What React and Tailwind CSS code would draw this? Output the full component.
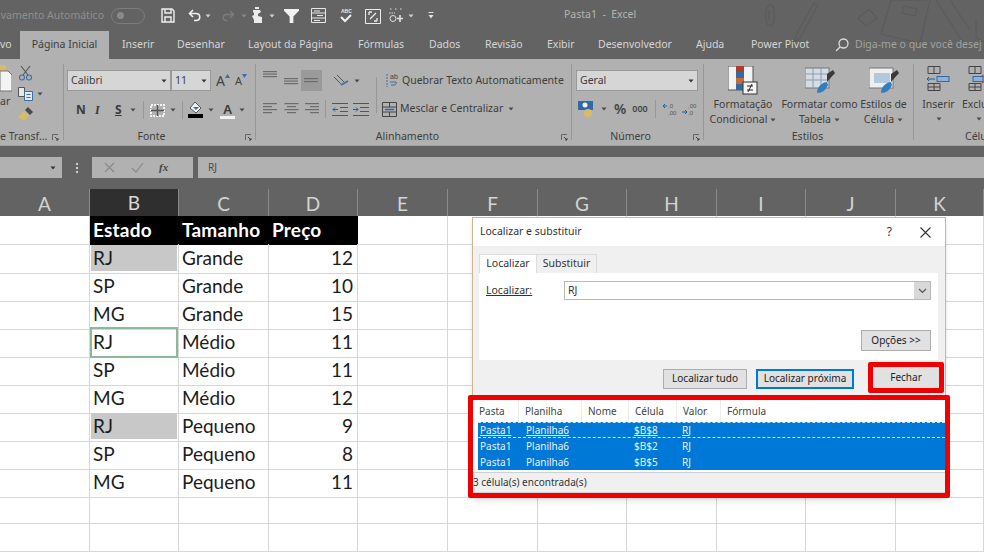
const uiFont = { fontFamily: '"Noto Sans", "Open Sans", sans-serif' }

const gridCols = 'grid grid-cols-[90px_89px_90px_89px_90px_90px_89px_90px_89px_90px_88px]'

const tabs = [
  ['Inserir', 'ml-[13px] w-[30px]'],
  ['Desenhar', 'ml-[25px] w-[45px]'],
  ['Layout da Página', 'ml-[26px] w-[84px]'],
  ['Fórmulas', 'ml-[26px] w-[45px]'],
  ['Dados', 'ml-[26px] w-[30px]'],
  ['Revisão', 'ml-[26px] w-[36px]'],
  ['Exibir', 'ml-[26px] w-[26px]'],
  ['Desenvolvedor', 'ml-[25px] w-[73px]'],
  ['Ajuda', 'ml-[25px] w-[29px]'],
  ['Power Pivot', 'ml-[26px] w-[58px]'],
]

const columns = ['A', 'B', 'C', 'D', 'E', 'F', 'G', 'H', 'I', 'J', 'K']

const sheetRows = [
  ['Estado', 'Tamanho', 'Preço'],
  ['RJ', 'Grande', '12'],
  ['SP', 'Grande', '10'],
  ['MG', 'Grande', '15'],
  ['RJ', 'Médio', '11'],
  ['SP', 'Médio', '11'],
  ['MG', 'Médio', '12'],
  ['RJ', 'Pequeno', '9'],
  ['SP', 'Pequeno', '8'],
  ['MG', 'Pequeno', '11'],
  ['', '', ''],
  ['', '', ''],
]

const results = [
  ['Pasta1', 'Planilha6', '$B$8', 'RJ'],
  ['Pasta1', 'Planilha6', '$B$2', 'RJ'],
  ['Pasta1', 'Planilha6', '$B$5', 'RJ'],
]

function Caret({ className = '', color = '#4a4a4a' }) {
  return (
    <svg width="6" height="4" viewBox="0 0 6 4" className={className}>
      <path d="M0.5 0.5h5L3 3.5z" fill={color} />
    </svg>
  )
}

function Launcher({ className = '' }) {
  return (
    <svg width="7" height="7" viewBox="0 0 7 7" className={className}>
      <path d="M0.5 6V0.5H6" stroke="#666" fill="none" />
      <path d="M3 3l3 3M6 4v2H4" stroke="#444" fill="none" />
    </svg>
  )
}

function Lines({ widths, gap = 3, color = '#6c6c6c', x = 0 }) {
  return (
    <svg width="15" height="13" viewBox="0 0 15 13">
      {widths.map((w, i) => (
        <rect key={i} x={x === 'right' ? 15 - w : x === 'center' ? (15 - w) / 2 : 0} y={i * gap} width={w} height="1.2" fill={color} />
      ))}
    </svg>
  )
}

function Sketches() {
  return (
    <svg width="224" height="59" viewBox="0 0 224 59" fill="none" stroke="#5b5b5b" strokeWidth="1.2">
      <path d="M8 6c-3 3-3 16 0 19 3 2 6-1 6-5V8c-1-3-4-4-6-2zM9 10v10" />
      <path d="M36 35L54 3l4 2-18 33-6 4z" />
      <path d="M98 18l11-9 8 9-11 8z" />
      <path d="M121 34l10-34M121 34l38 9 5-14M131 0h36M160 43l10-43" />
      <path d="M144 6l13 3-2 7-13-3z" />
      <path d="M176 0l28 44M190 0l20 30M216 20v18l8 4" />
    </svg>
  )
}

function TitleBar() {
  return (
    <div className="relative flex items-center h-[31px]">
      <div className="w-[111px] shrink-0 pr-[7px] flex justify-end text-[10.5px] text-[#8f8f8f] whitespace-nowrap">vamento Automático</div>
      <div className="w-[34px] h-[16px] rounded-full border border-[#7c7c7c] flex items-center pl-[5px] shrink-0">
        <div className="w-[7px] h-[7px] rounded-full bg-[#8a8a8a]" />
      </div>
      <svg width="14" height="15" viewBox="0 0 14 15" className="ml-[16px] shrink-0" fill="none" stroke="#f0f0f0" strokeWidth="1.4">
        <path d="M1 1h10l2 2v11H1z" />
        <path d="M4 1v4h6V1M4 14V9h6v5" />
      </svg>
      <svg width="14" height="13" viewBox="0 0 14 13" className="ml-[13px] shrink-0" fill="none" stroke="#f0f0f0" strokeWidth="1.6">
        <path d="M5 1L1.5 4.5 5 8M2 4.5h6c5 0 5 7 0 7H6" />
      </svg>
      <Caret color="#d0d0d0" className="ml-[3px] shrink-0" />
      <svg width="14" height="12" viewBox="0 0 14 12" className="ml-[10px] shrink-0" fill="none" stroke="#7e7e7e" strokeWidth="1.4">
        <path d="M9 1l3.5 3.5L9 8M12 4.500H6c-5 0-5 6 0 6" />
      </svg>
      <Caret color="#8a8a8a" className="ml-[6px] shrink-0" />
      <svg width="12" height="17" viewBox="0 0 12 17" className="ml-[4px] shrink-0" fill="#ececec">
        <path d="M4 0h4v2H4zM2 3h7l1 2-3 2v2l4 1v6H3v-3L1 9l2-1V6L2 5z" />
      </svg>
      <Caret color="#d0d0d0" className="ml-[6px] shrink-0" />
      <svg width="15" height="14" viewBox="0 0 16 15" className="ml-[9px] shrink-0" fill="#f2f2f2">
        <path d="M0 0h16v2l-6 6v7H6V8L0 2z" />
      </svg>
      <svg width="15" height="15" viewBox="0 0 15 15" className="ml-[12px] shrink-0" fill="none" stroke="#e8e8e8">
        <path d="M0.500 0.500h14v14h-14zM0.500 5h14M0.500 10h14" />
        <path d="M3 3h6M6 7.500h6M3 12.500h6" />
      </svg>
      <svg width="14" height="15" viewBox="0 0 14 15" className="ml-[13px] shrink-0" fill="none">
        <text x="2" y="5" fontSize="5" fill="#e8e8e8" fontFamily="Liberation Sans" fontWeight="700">ABC</text>
        <path d="M2 9l4 4 6-6" stroke="#f0f0f0" strokeWidth="2" />
      </svg>
      <svg width="16" height="16" viewBox="0 0 16 16" className="ml-[12px] shrink-0" fill="none" stroke="#ececec">
        <path d="M0.500 1.500h15v14h-15z" />
        <path d="M4 4h3M4 4v3M12 13H9M12 13v-3M5 11l6-6" strokeWidth="1.300" />
      </svg>
      <svg width="16" height="15" viewBox="0 0 16 15" className="ml-[7px] shrink-0" fill="none" stroke="#e0e0e0">
        <path d="M2 1h2M7 1h2M12 1h2M1 5h6" strokeDasharray="1.500 1" />
        <circle cx="5" cy="10.500" r="3" />
        <path d="M12 7v7M9 10.500h6" strokeWidth="1.600" />
      </svg>
      <Caret color="#d0d0d0" className="ml-[4px] shrink-0" />
      <svg width="6" height="7" viewBox="0 0 6 7" className="ml-[14px] shrink-0">
        <path d="M0.500 0.500h5" stroke="#e0e0e0" />
        <path d="M0.500 3h5L3 6.500z" fill="#e0e0e0" />
      </svg>
      <span className="absolute left-[564px] top-[7px] text-[10.5px] text-[#b4b4b4] whitespace-pre">Pasta1  -  Excel</span>
    </div>
  )
}

function TabBar() {
  return (
    <div className="relative flex items-stretch h-[28px] overflow-hidden text-[10.5px] text-[#d6d6d6] whitespace-nowrap">
      <span className="w-[20px] shrink-0 flex items-center">vo</span>
      <span className="w-[89px] shrink-0 bg-[#b1b1b1] text-[#3d3d3d] flex items-center justify-center">Página Inicial</span>
      {tabs.map(([label, cls]) => (
        <span key={label} className={`${cls} shrink-0 flex items-center`}>{label}</span>
      ))}
      <svg width="14" height="14" viewBox="0 0 14 14" className="ml-[26px] shrink-0 self-center" fill="none" stroke="#dedede" strokeWidth="1.3">
        <circle cx="8.500" cy="5.500" r="4.500" />
        <path d="M5 9l-4 4" />
      </svg>
      <span className="ml-[6px] text-[#a2a2a2] flex items-center">Diga-me o que você desej</span>
    </div>
  )
}

function GroupLabel({ children, launcher, className = '' }) {
  return (
    <div className={`absolute bottom-[-7px] left-0 right-0 h-[20px] flex items-center justify-center text-[10.5px] text-[#3f3f3f] ${className}`}>
      {children}
      {launcher && <Launcher className="absolute right-[3px] top-[7px]" />}
    </div>
  )
}

function Combo({ label, className = '' }) {
  return (
    <div className={`h-[21px] bg-[#d6d6d6] border border-[#999] flex items-center justify-between pl-[3px] pr-[3px] text-[10.5px] text-[#3d3d3d] ${className}`}>
      <span>{label}</span>
      <Caret color="#333" />
    </div>
  )
}

function ClipboardGroup() {
  return (
    <div className="relative w-[64px] shrink-0 border-r border-[#979797] my-[5px]">
      <div className="flex pt-[1px]">
        <div className="w-[18px] shrink-0 flex flex-col items-start">
          <svg width="12" height="28" viewBox="0 0 12 28">
            <rect x="0" y="0" width="6" height="6" fill="#d9b96a" />
            <path d="M0 6h8l4 4v16H0z" fill="#f4f4f4" stroke="#777" />
          </svg>
          <span className="text-[10.5px] text-[#3f3f3f] leading-[12px] mt-[2px]">ar</span>
        </div>
        <div className="flex flex-col gap-[6px]">
          <svg width="15" height="16" viewBox="0 0 15 16" fill="none" stroke="#555" strokeWidth="1.100">
            <path d="M3 1l7 9M12 1l-7 9" />
            <circle cx="4" cy="12.500" r="2.500" stroke="#3a6ea5" />
            <circle cx="11" cy="12.500" r="2.500" stroke="#3a6ea5" />
          </svg>
          <div className="flex items-center gap-[4px]">
            <svg width="15" height="14" viewBox="0 0 15 14" fill="none" stroke="#555">
              <path d="M0.500 0.500h6v9h-6z" fill="#e8e8e8" />
              <path d="M6.500 4.500h8v9h-8z" fill="#e8e8e8" stroke="#3a6ea5" />
              <path d="M8.500 7.500h4M8.500 10.500h4" stroke="#3a6ea5" />
            </svg>
            <Caret />
          </div>
          <svg width="15" height="14" viewBox="0 0 15 14">
            <path d="M0 10l6-6 5 5-5 5z" fill="#d9b96a" />
            <path d="M7 3l3-3 5 5-3 3z" fill="#4a4a4a" />
          </svg>
        </div>
      </div>
      <div className="absolute bottom-[-7px] left-0 right-0 h-[20px] flex items-center text-[10.5px] text-[#3f3f3f] whitespace-nowrap">
        <span>e Transf...</span>
        <Launcher className="absolute left-[52px] top-[7px]" />
      </div>
    </div>
  )
}

function FontGroup() {
  return (
    <div className="relative w-[192px] shrink-0 border-r border-[#979797] my-[5px] pl-[3px] pt-[6px]">
      <div className="flex items-center">
        <Combo label="Calibri" className="w-[104px]" />
        <Combo label="11" className="w-[40px]" />
        <span className="ml-[5px] text-[14px] text-[#444] leading-none">A</span>
        <svg width="5" height="4" viewBox="0 0 5 4" className="mb-[10px]"><path d="M0 4l2.500-4L5 4z" fill="#3a6ea5" /></svg>
        <span className="ml-[5px] text-[11px] text-[#444] leading-none">A</span>
        <svg width="5" height="4" viewBox="0 0 5 4" className="mb-[10px]"><path d="M0 0l2.500 4L5 0z" fill="#3a6ea5" /></svg>
      </div>
      <div className="flex items-center mt-[9px] h-[20px] text-[12px] text-[#3a3a3a]">
        <span className="ml-[9px] w-[19px] font-bold">N</span>
        <span className="w-[20px] italic font-bold" style={{ fontFamily: '"Liberation Serif", serif' }}>I</span>
        <span className="w-[15px] underline font-bold">S</span>
        <Caret />
        <div className="ml-[7px] mr-[6px] w-px h-[18px] bg-[#979797]" />
        <svg width="15" height="13" viewBox="0 0 15 13" fill="none" stroke="#f2f2f2" strokeWidth="2">
          <rect x="1" y="1" width="13" height="11" strokeDasharray="2 1" />
          <path d="M7.500 1v11M1 6.500h13" stroke="#555" strokeWidth="1.500" />
        </svg>
        <Caret className="ml-[5px]" />
        <div className="ml-[6px] mr-[5px] w-px h-[18px] bg-[#979797]" />
        <svg width="15" height="16" viewBox="0 0 15 16">
          <path d="M7 0l6 6-5 5-6-5z" fill="#f2f2f2" stroke="#555" />
          <path d="M5 5h6l-3 3z" fill="#3a6ea5" />
          <rect x="0" y="12" width="15" height="4" fill="#000" />
        </svg>
        <Caret className="ml-[5px]" />
        <span className="ml-[6px] w-[15px] relative text-center font-semibold text-[13px] leading-[14px] border-b-[3px] border-[#f2f2f2]">A</span>
        <Caret className="ml-[4px]" />
      </div>
      <GroupLabel launcher className="pr-[16px]">Fonte</GroupLabel>
    </div>
  )
}

function AlignGroup() {
  return (
    <div className="relative w-[316px] shrink-0 border-r border-[#979797] my-[5px] pt-[6px]">
      <div className="flex items-center h-[21px] pl-[7px]">
        <div className="mt-[-6px] flex"><Lines widths={[14, 14, 14]} gap={2.500} /></div>
        <div className="ml-[6px] mt-[8px] flex"><Lines widths={[14, 14, 14]} gap={2.500} /></div>
        <div className="ml-[2px] w-[21px] h-[21px] bg-[#9a9a9a] flex items-end justify-center"><Lines widths={[14, 14]} gap={3} /></div>
        <svg width="16" height="14" viewBox="0 0 16 14" className="ml-[11px]" fill="none" stroke="#555">
          <path d="M1 3l7 7M4 1l7 7" />
          <path d="M8 11l7-4" stroke="#3a6ea5" strokeWidth="1.500" />
        </svg>
        <Caret className="ml-[5px]" />
        <div className="ml-[16px] mr-[8px] w-px h-[36px] mt-[28px] bg-[#979797]" />
        <div className="flex items-center gap-[3px] text-[10.5px] text-[#3d3d3d] whitespace-nowrap">
          <svg width="14" height="15" viewBox="0 0 14 15" fill="none" stroke="#555">
            <path d="M2 1v13" stroke="#3a6ea5" strokeDasharray="2 1" />
            <text x="5" y="6" fontSize="7" fill="#444" stroke="none" fontFamily="Liberation Sans">ab</text>
            <path d="M5 9h6a2 2 0 0 1-2 3H6" stroke="#3a6ea5" />
          </svg>
          Quebrar Texto Automaticamente
        </div>
      </div>
      <div className="flex items-center h-[20px] mt-[8px] pl-[7px]">
        <Lines widths={[14, 9, 14, 9]} gap={3} />
        <div className="ml-[6px]"><Lines widths={[14, 9, 14, 9]} gap={3} x="center" /></div>
        <div className="ml-[5px]"><Lines widths={[14, 9, 14, 9]} gap={3} x="right" /></div>
        <div className="ml-[6px] w-px h-[18px] bg-[#979797]" />
        <svg width="16" height="13" viewBox="0 0 16 13" className="ml-[6px]" fill="none" stroke="#555">
          <path d="M0 0.500h16M8 4.500h8M8 8.500h8M0 12.500h16" />
          <path d="M6 6.500H1M3 4.500l-2 2 2 2" stroke="#1f5f9f" />
        </svg>
        <svg width="16" height="13" viewBox="0 0 16 13" className="ml-[5px]" fill="none" stroke="#555">
          <path d="M0 0.500h16M7 4.500h9M7 8.500h9M0 12.500h16" />
          <path d="M0 6.500h5M3 4.500l2 2-2 2" stroke="#1f5f9f" />
        </svg>
        <div className="flex items-center gap-[3px] ml-[13px] text-[10.5px] text-[#3d3d3d] whitespace-nowrap">
          <svg width="15" height="15" viewBox="0 0 15 15" fill="none" stroke="#444">
            <path d="M0.500 0.500h14v14h-14zM0.500 5h14M0.500 10h14M7.500 0.500V5M7.500 10v5" />
            <path d="M3 7.500h9" stroke="#2a6aa8" strokeWidth="1.500" />
          </svg>
          Mesclar e Centralizar
          <Caret className="ml-[2px]" />
        </div>
      </div>
      <GroupLabel launcher className="pr-[12px]">Alinhamento</GroupLabel>
    </div>
  )
}

function NumberGroup() {
  return (
    <div className="relative w-[132px] shrink-0 border-r border-[#979797] my-[5px] pl-[4px] pt-[6px]">
      <Combo label="Geral" className="w-[122px]" />
      <div className="flex items-center h-[20px] mt-[8px] text-[#444]">
        <svg width="17" height="17" viewBox="0 0 17 17" className="ml-[2px]">
          <rect x="0" y="0" width="15" height="9" fill="#2f6aa5" />
          <circle cx="7" cy="4" r="2.500" fill="#f2f2f2" />
          <circle cx="10" cy="12" r="4" fill="#d9b96a" />
        </svg>
        <Caret className="ml-[6px]" />
        <span className="ml-[7px] text-[14px] font-semibold leading-none">%</span>
        <span className="ml-[6px] text-[9px] font-semibold">000</span>
        <div className="ml-[7px] w-px h-[18px] bg-[#979797]" />
        <svg width="16" height="14" viewBox="0 0 16 14" className="ml-[6px]" fill="none" stroke="#555">
          <text x="6" y="6" fontSize="6" fill="#555" stroke="none" fontFamily="Liberation Sans">,0</text>
          <text x="6" y="13" fontSize="6" fill="#555" stroke="none" fontFamily="Liberation Sans">,00</text>
          <path d="M1 4h4M1 4l2-2M1 4l2 2" stroke="#1f5f9f" />
        </svg>
        <svg width="16" height="14" viewBox="0 0 16 14" className="ml-[4px]" fill="none" stroke="#555">
          <text x="6" y="6" fontSize="6" fill="#555" stroke="none" fontFamily="Liberation Sans">,00</text>
          <text x="6" y="13" fontSize="6" fill="#555" stroke="none" fontFamily="Liberation Sans">,0</text>
          <path d="M0 10h5M5 10l-2-2M5 10l-2 2" stroke="#1f5f9f" />
        </svg>
      </div>
      <GroupLabel launcher className="pr-[14px]">Número</GroupLabel>
    </div>
  )
}

function StyleButton({ width, icon, line1, line2 }) {
  return (
    <div className={`${width} shrink-0 flex flex-col items-center text-[10.5px] leading-[15px] text-[#3d3d3d] whitespace-nowrap`}>
      <div className="h-[32px] flex items-center">{icon}</div>
      <span className="mt-[1px]">{line1}</span>
      <span className="flex items-center gap-[3px]">{line2}<Caret /></span>
    </div>
  )
}

function StylesGroup() {
  return (
    <div className="relative w-[210px] shrink-0 border-r border-[#979797] my-[5px] flex">
      <StyleButton
        width="w-[76px] ml-[1px]"
        line1="Formatação"
        line2="Condicional"
        icon={
          <svg width="30" height="29" viewBox="0 0 30 29">
            <rect x="0" y="0" width="25" height="24" fill="#f2f2f2" stroke="#555" />
            <rect x="8" y="0" width="8" height="6" fill="#b33a2a" />
            <rect x="8" y="6" width="8" height="6" fill="#2f6aa5" />
            <rect x="8" y="12" width="8" height="6" fill="#c96a35" />
            <rect x="8" y="18" width="8" height="6" fill="#2f6aa5" />
            <rect x="15" y="16" width="14" height="12" fill="#f5f5f5" stroke="#333" />
            <path d="M19 20h6M19 24h6M24 18l-4 8" stroke="#222" />
          </svg>
        }
      />
      <StyleButton
        width="w-[77px]"
        line1="Formatar como"
        line2="Tabela"
        icon={
          <svg width="30" height="28" viewBox="0 0 30 28">
            <rect x="0" y="2" width="24" height="20" fill="#d7dce2" stroke="#777" />
            <path d="M0 8h24M0 14h24M8 2v20M16 2v20" stroke="#8c9bb0" />
            <path d="M22 8l6-4 2 3-8 9z" fill="#3a3a3a" />
            <path d="M12 27c0-7 6-11 10-11l1 3c-2 5-6 8-11 8z" fill="#2f7fc0" />
          </svg>
        }
      />
      <StyleButton
        width="w-[51px]"
        line1="Estilos de"
        line2="Célula"
        icon={
          <svg width="30" height="28" viewBox="0 0 30 28">
            <rect x="0" y="2" width="24" height="20" fill="#eeeeee" stroke="#777" />
            <rect x="5" y="7" width="16" height="10" fill="#b4c8dc" />
            <path d="M22 8l6-4 2 3-8 9z" fill="#3a3a3a" />
            <path d="M12 27c0-7 6-11 10-11l1 3c-2 5-6 8-11 8z" fill="#2f7fc0" />
          </svg>
        }
      />
      <GroupLabel className="pr-[2px]">Estilos</GroupLabel>
    </div>
  )
}

function CellsGroup() {
  return (
    <div className="relative flex-1 my-[5px] flex">
      <div className="ml-[2px] w-[45px] shrink-0 flex flex-col items-center text-[10.5px] leading-[15px] text-[#3d3d3d]">
        <svg width="25" height="25" viewBox="0 0 25 25" className="mt-[2px] mb-[6px]" fill="none" stroke="#444">
          <path d="M2 0.500h12v7H2zM8 0.500v7M2 17.500h12v7H2zM2 21h12M8 17.500v7" />
          <rect x="11" y="10.500" width="12" height="5" fill="#8fb2d6" stroke="#2f6aa5" />
          <path d="M1 13h8M3 11l-2 2 2 2" stroke="#1f5f9f" />
        </svg>
        <span>Inserir</span>
        <Caret className="mt-[5px]" />
      </div>
      <div className="w-[24px] ml-[1px] shrink-0 flex flex-col items-start text-[10.5px] leading-[15px] text-[#3d3d3d] whitespace-nowrap">
        <svg width="25" height="25" viewBox="0 0 25 25" className="mt-[2px] mb-[6px] ml-[5px]" fill="none" stroke="#444">
          <path d="M2 0.500h12v7H2zM8 0.500v7M2 17.500h12v7H2zM2 21h12M8 17.500v7" />
          <rect x="6" y="10.500" width="10" height="5" fill="#8fb2d6" stroke="#2f6aa5" />
          <path d="M15 9l5 4-5 4M25 9l-5 4 5 4" stroke="#c8452f" strokeWidth="1.500" />
        </svg>
        <span>Exclu</span>
        <Caret className="mt-[5px] ml-[14px]" />
      </div>
      <div className="absolute bottom-[-7px] left-[51px] h-[20px] flex items-center text-[10.5px] text-[#3f3f3f] whitespace-nowrap">Célu</div>
    </div>
  )
}

function Ribbon() {
  return (
    <div className="flex h-[87px] bg-[#b1b1b1] overflow-hidden border-b border-[#a2a2a2]">
      <ClipboardGroup />
      <FontGroup />
      <AlignGroup />
      <NumberGroup />
      <StylesGroup />
      <CellsGroup />
    </div>
  )
}

function FormulaBar() {
  return (
    <div className="flex items-center h-[43px] bg-[#636363]">
      <div className="w-[62px] h-[21px] bg-[#b1b1b1] flex items-center justify-end pr-[6px] shrink-0">
        <Caret color="#333" />
      </div>
      <div className="w-[30px] flex flex-col items-center gap-[2px] shrink-0">
        <div className="w-[2px] h-[2px] bg-[#d0d0d0]" />
        <div className="w-[2px] h-[2px] bg-[#d0d0d0]" />
        <div className="w-[2px] h-[2px] bg-[#d0d0d0]" />
      </div>
      <div className="w-[101px] h-[21px] bg-[#b1b1b1] flex items-center shrink-0">
        <svg width="11" height="11" viewBox="0 0 11 11" className="ml-[12px]" stroke="#8a8a8a" strokeWidth="1.200" fill="none">
          <path d="M1 1l9 9M10 1l-9 9" />
        </svg>
        <svg width="13" height="11" viewBox="0 0 13 11" className="ml-[16px]" stroke="#8a8a8a" strokeWidth="1.200" fill="none">
          <path d="M1 6l4 4 7-9" />
        </svg>
        <span className="ml-[15px] text-[11px] italic font-semibold text-[#444]" style={{ fontFamily: '"Liberation Serif", serif' }}>fx</span>
      </div>
      <div className="ml-[5px] flex-1 h-[21px] bg-[#b1b1b1] flex items-center pl-[10px] text-[10px] text-[#4a4a4a]">RJ</div>
    </div>
  )
}

function ColumnHeaders() {
  return (
    <div className={`${gridCols} h-[27px] bg-[#636363]`}>
      {columns.map((col) => (
        <div
          key={col}
          className={`flex items-center justify-center text-[19px] border-r border-[#8a8a8a] ${col === 'B' ? 'bg-[#2f2f2f] text-[#d9d9d9] border-b-2 border-b-[#217346]' : 'text-[#d4d4d4]'}`}
          style={{ fontFamily: 'Lato, sans-serif' }}
        >
          {col}
        </div>
      ))}
    </div>
  )
}

function SheetCell({ value, rowIndex, colIndex }) {
  const isHeader = rowIndex === 0
  const isFound = colIndex === 1 && (rowIndex === 1 || rowIndex === 7)
  const isActive = colIndex === 1 && rowIndex === 4

  if (isHeader && colIndex >= 1 && colIndex <= 3) {
    return (
      <div className="bg-black text-white font-bold px-[3px] flex items-center text-[19px] tracking-[0.2px] whitespace-nowrap">
        {value}
      </div>
    )
  }

  return (
    <div className={`relative border-r border-b border-[#d6d6d6] flex items-center px-[3px] text-[19px] text-[#1c1c1c] ${colIndex === 3 ? 'justify-end pr-[4px]' : ''}`}>
      {isFound && <div className="absolute inset-x-[1px] top-[1px] bottom-[2px] bg-[#c8c8c8]" />}
      {isActive && <div className="absolute -inset-y-px inset-x-0 border-2 border-[#8cb89c]" />}
      <span className="relative">{value}</span>
    </div>
  )
}

function Sheet() {
  return (
    <div className="bg-white" style={{ fontFamily: 'Lato, sans-serif' }}>
      {sheetRows.map((row, rowIndex) => (
        <div key={rowIndex} className={`${gridCols} h-[28px]`}>
          {columns.map((col, colIndex) => (
            <SheetCell
              key={col}
              rowIndex={rowIndex}
              colIndex={colIndex}
              value={colIndex >= 1 && colIndex <= 3 ? row[colIndex - 1] : ''}
            />
          ))}
        </div>
      ))}
    </div>
  )
}

function DialogButton({ children, className = 'border border-[#adadad]' }) {
  return (
    <div className={`h-full bg-[#e1e1e1] flex items-center justify-center text-[10px] text-[#222] whitespace-nowrap ${className}`}>
      {children}
    </div>
  )
}

function FindDialog() {
  return (
    <div className="absolute left-[472px] top-[217px] w-[474px] bg-[#f0f0f0] border-x border-t border-[#cdb690] shadow-md text-[#333]" style={uiFont}>
      <div className="h-[28px] bg-white flex items-center justify-between pl-[7px] pr-[14px] text-[10.5px]">
        <span>Localizar e substituir</span>
        <div className="flex items-center gap-[28px]">
          <span className="text-[12px]">?</span>
          <svg width="11" height="11" viewBox="0 0 11 11" stroke="#333" strokeWidth="1.100"><path d="M0.500 0.500l10 10M10.500 0.500l-10 10" /></svg>
        </div>
      </div>
      <div className="pt-[8px] px-[6px]">
        <div className="flex text-[10.5px] h-[19px]">
          <span className="w-[58px] bg-white border-x border-t border-[#dcdcdc] flex items-center justify-center">Localizar</span>
          <span className="w-[60px] border-r border-t border-[#dcdcdc] flex items-center justify-center">Substituir</span>
        </div>
        <div className="h-[87px] bg-white px-[7px] pt-[8px] w-[459px] flex flex-col">
          <div className="flex items-center text-[10.5px]">
            <span className="w-[78px] shrink-0"><span className="underline">Localizar:</span></span>
            <div className="w-[369px] h-[19px] border border-[#b8b8b8] flex items-center justify-between pl-[3px]">
              RJ
              <div className="w-[16px] h-[17px] bg-[#d8d8d8] flex items-center justify-center">
                <svg width="9" height="6" viewBox="0 0 9 6" fill="none" stroke="#555" strokeWidth="1.200"><path d="M1 1l3.500 3.500L8 1" /></svg>
              </div>
            </div>
          </div>
          <div className="h-[21px] w-[70px] self-end mt-[30px]">
            <DialogButton>Opções &gt;&gt;</DialogButton>
          </div>
        </div>
      </div>
      <div className="flex items-center h-[35px] relative pl-[190px] pt-[2px]">
        <div className="w-[84px] h-[20px]">
          <DialogButton>Localizar tudo</DialogButton>
        </div>
        <div className="w-[98px] h-[20px] ml-[9px]">
          <DialogButton className="border-2 border-[#0078d7]">Localizar próxima</DialogButton>
        </div>
        <div className="absolute left-[395px] top-[2px] w-[76px] h-[31px] border-[5px] border-[#f00000] rounded-[2px] bg-[#e1e1e1]">
          <DialogButton className="border-0">Fechar</DialogButton>
        </div>
      </div>
      <div className="-mx-[5px] border-[5px] border-[#f00000] rounded-[2px] bg-white text-[10px]">
        <div className="flex h-[22px] text-[#444]">
          <span className="w-[46px] pl-[6px] flex items-center border-r border-[#ececec]">Pasta</span>
          <span className="w-[63px] pl-[6px] flex items-center border-r border-[#ececec]">Planilha</span>
          <span className="w-[47px] pl-[6px] flex items-center border-r border-[#ececec]">Nome</span>
          <span className="w-[48px] pl-[6px] flex items-center border-r border-[#ececec]">Célula</span>
          <span className="w-[44px] pl-[6px] flex items-center border-r border-[#ececec]">Valor</span>
          <span className="pl-[6px] flex items-center">Fórmula</span>
        </div>
        <div className="ml-[5px] bg-[#0078d7] text-[#e8f2fb]">
          {results.map((r, i) => (
            <div key={i} className={`flex h-[16px] items-center border-white/80 border-dashed ${i === 0 ? 'border-y' : ''}`}>
              <span className={`w-[46px] pl-[2px] ${i === 0 ? 'underline' : ''}`}>{r[0]}</span>
              <span className={`w-[110px] pl-[2px] ${i === 0 ? 'underline' : ''}`}>{r[1]}</span>
              <span className={`w-[48px] ${i === 0 ? 'underline' : ''}`}>{r[2]}</span>
              <span className={i === 0 ? 'underline' : ''}>{r[3]}</span>
            </div>
          ))}
        </div>
        <div className="h-[21px] mt-[2px] bg-[#f0f0f0] border-y border-[#d0d0d0] flex items-center text-[10px] text-[#333] whitespace-nowrap">
          3 célula(s) encontrada(s)
        </div>
      </div>
    </div>
  )
}

export default function App() {
  return (
    <div className="relative w-[984px] h-[552px] overflow-hidden bg-white" style={uiFont}>
      <div className="relative bg-[#636363]">
        <div className="absolute left-[760px] top-0">
          <Sketches />
        </div>
        <TitleBar />
        <TabBar />
      </div>
      <Ribbon />
      <FormulaBar />
      <ColumnHeaders />
      <Sheet />
      <FindDialog />
    </div>
  )
}
